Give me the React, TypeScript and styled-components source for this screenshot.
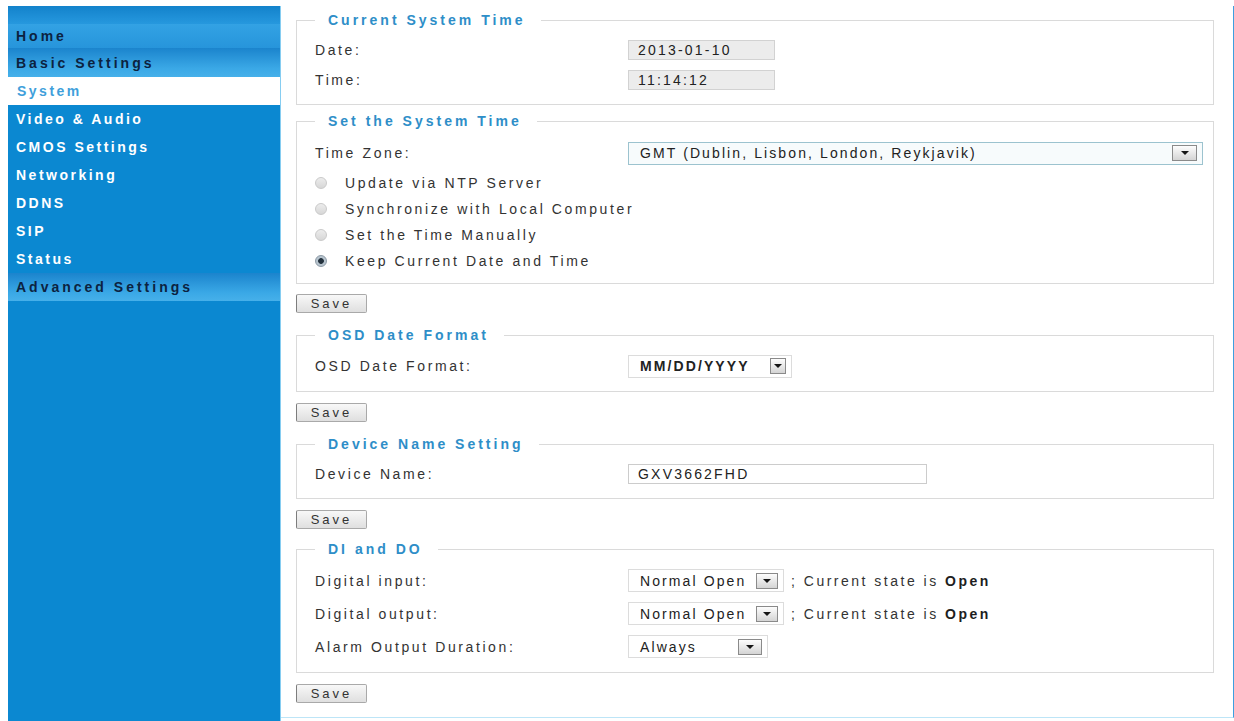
import React from "react";
import styled, { createGlobalStyle } from "styled-components";

const GlobalStyle = createGlobalStyle`
  html, body { margin: 0; padding: 0; background: #ffffff; }
  body {
    font-family: "Liberation Sans", Arial, Helvetica, sans-serif;
    font-size: 14px;
    color: #333333;
  }
  * { box-sizing: border-box; }
`;

const Page = styled.div`
  display: flex;
  align-items: flex-start;
  min-height: 100vh;
  padding: 6px 0 0 8px;
`;

/* ---------- left navigation ---------- */

const Sidebar = styled.nav`
  align-self: stretch;
  flex: none;
  width: 273px;
  display: flex;
  flex-direction: column;
  background: #0b88d1;
  border-right: 1px solid #86cdf1;
`;

const SideTop = styled.div`
  height: 18px;
  background: linear-gradient(#1382cb, #2698de);
`;

const SideHeader = styled.div<{ $h: number; $rise?: boolean }>`
  height: ${(p) => p.$h}px;
  display: flex;
  align-items: center;
  padding-left: 8px;
  font-weight: bold;
  letter-spacing: 3px;
  color: #0c2240;
  background: ${(p) =>
    p.$rise
      ? "linear-gradient(#1b84cd, #3aa8e6 70%, #46b0ea)"
      : "linear-gradient(#33a2e4, #2795db)"};
`;

const SideItem = styled.div<{ $active?: boolean }>`
  height: 28px;
  display: flex;
  align-items: center;
  padding-left: ${(p) => (p.$active ? 9 : 8)}px;
  font-weight: bold;
  letter-spacing: 2.5px;
  color: ${(p) => (p.$active ? "#3f9fdb" : "#ffffff")};
  background: ${(p) => (p.$active ? "#ffffff" : "transparent")};
`;

/* ---------- settings panel ---------- */

const Main = styled.main`
  flex: 1;
  align-self: flex-start;
  min-width: 0;
  margin-bottom: 3px;
  padding: 6px 19px 14px 15px;
  border-right: 1px solid #3c9fe0;
  border-bottom: 1px solid #bde5f7;
`;

const Group = styled.fieldset<{ $gap?: number }>`
  margin: ${(p) => p.$gap ?? 0}px 0 0;
  padding: 7px 18px 9px;
  min-width: 0;
  border: 1px solid #dadada;
`;

const Title = styled.legend`
  padding: 0 15px 0 13px;
  line-height: 16px;
  font-weight: bold;
  letter-spacing: 3px;
  color: #2e8ec8;
`;

const Row = styled.div<{ $h: number }>`
  display: flex;
  align-items: center;
  height: ${(p) => p.$h}px;
`;

const Label = styled.div`
  flex: none;
  width: 313px;
  letter-spacing: 2.6px;
  color: #333333;
`;

const TextField = styled.div<{ $w: number; $readonly?: boolean }>`
  flex: none;
  width: ${(p) => p.$w}px;
  height: 20px;
  display: flex;
  align-items: center;
  padding-left: 9px;
  letter-spacing: 2.2px;
  color: #222222;
  border: 1px solid ${(p) => (p.$readonly ? "#d2d2d2" : "#cccccc")};
  background: ${(p) => (p.$readonly ? "#ececec" : "#ffffff")};
`;

const Dropdown = styled.div<{ $w: number; $tint?: boolean }>`
  flex: none;
  width: ${(p) => p.$w}px;
  height: 23px;
  display: flex;
  align-items: center;
  justify-content: space-between;
  padding: 0 5px 0 11px;
  border: 1px solid ${(p) => (p.$tint ? "#9cc3cf" : "#dcdcdc")};
  background: ${(p) => (p.$tint ? "#f7fbfc" : "#ffffff")};
`;

const DropText = styled.span<{ $bold?: boolean }>`
  letter-spacing: 2.1px;
  white-space: nowrap;
  color: #222222;
  font-weight: ${(p) => (p.$bold ? "bold" : "normal")};
`;

const DropArrow = styled.span<{ $w: number }>`
  flex: none;
  width: ${(p) => p.$w}px;
  height: 16px;
  display: flex;
  align-items: center;
  justify-content: center;
  border: 1px solid #8a8a8a;
  background: linear-gradient(#fdfdfd, #d4d4d4);

  &::after {
    content: "";
    border-left: 4px solid transparent;
    border-right: 4px solid transparent;
    border-top: 4px solid #151515;
  }
`;

const RadioDot = styled.span<{ $on?: boolean }>`
  flex: none;
  width: 12px;
  height: 12px;
  margin-right: 18px;
  border-radius: 50%;
  border: 1px solid ${(p) => (p.$on ? "#8d9aa6" : "#cacaca")};
  background: ${(p) =>
    p.$on
      ? "radial-gradient(circle, #24323e 0, #24323e 2.5px, #b7c4ce 3.2px)"
      : "linear-gradient(#ececec, #d7d7d7)"};
`;

const RadioText = styled.span`
  letter-spacing: 2.6px;
  color: #333333;
`;

const StateNote = styled.span`
  margin-left: 7px;
  letter-spacing: 2.5px;
  color: #333333;
  white-space: nowrap;

  b {
    color: #1e1e1e;
  }
`;

const SaveButton = styled.button<{ $gap?: number }>`
  display: block;
  width: 71px;
  height: 19px;
  margin-top: ${(p) => p.$gap ?? 11}px;
  padding: 0;
  font: inherit;
  font-size: 13px;
  letter-spacing: 3px;
  color: #333333;
  border: 1px solid #a9a9a9;
  border-left-color: #7d7d7d;
  border-radius: 2px;
  background: linear-gradient(#f8f8f8, #dfdfdf);
  cursor: pointer;
`;

const navItems = [
  "Video & Audio",
  "CMOS Settings",
  "Networking",
  "DDNS",
  "SIP",
  "Status",
];

const timeModes = [
  { label: "Update via NTP Server", on: false },
  { label: "Synchronize with Local Computer", on: false },
  { label: "Set the Time Manually", on: false },
  { label: "Keep Current Date and Time", on: true },
];

export default function App() {
  return (
    <>
      <GlobalStyle />
      <Page>
        <Sidebar>
          <SideTop />
          <SideHeader $h={24}>Home</SideHeader>
          <SideHeader $h={29} $rise>
            Basic Settings
          </SideHeader>
          <SideItem $active>System</SideItem>
          {navItems.map((item) => (
            <SideItem key={item}>{item}</SideItem>
          ))}
          <SideHeader $h={28} $rise>
            Advanced Settings
          </SideHeader>
        </Sidebar>

        <Main>
          <Group>
            <Title>Current System Time</Title>
            <Row $h={30}>
              <Label>Date:</Label>
              <TextField $w={147} $readonly>
                2013-01-10
              </TextField>
            </Row>
            <Row $h={30}>
              <Label>Time:</Label>
              <TextField $w={147} $readonly>
                11:14:12
              </TextField>
            </Row>
          </Group>

          <Group $gap={8}>
            <Title>Set the System Time</Title>
            <Row $h={34}>
              <Label>Time Zone:</Label>
              <Dropdown $w={575} $tint>
                <DropText>GMT (Dublin, Lisbon, London, Reykjavik)</DropText>
                <DropArrow $w={25} />
              </Dropdown>
            </Row>
            {timeModes.map((m) => (
              <Row $h={26} key={m.label}>
                <RadioDot $on={m.on} />
                <RadioText>{m.label}</RadioText>
              </Row>
            ))}
          </Group>
          <SaveButton $gap={10}>Save</SaveButton>

          <Group $gap={14}>
            <Title>OSD Date Format</Title>
            <Row $h={32}>
              <Label>OSD Date Format:</Label>
              <Dropdown $w={164}>
                <DropText $bold>MM/DD/YYYY</DropText>
                <DropArrow $w={16} />
              </Dropdown>
            </Row>
          </Group>
          <SaveButton>Save</SaveButton>

          <Group $gap={14}>
            <Title>Device Name Setting</Title>
            <Row $h={30}>
              <Label>Device Name:</Label>
              <TextField $w={299}>GXV3662FHD</TextField>
            </Row>
          </Group>
          <SaveButton>Save</SaveButton>

          <Group $gap={12}>
            <Title>DI and DO</Title>
            <Row $h={33}>
              <Label>Digital input:</Label>
              <Dropdown $w={156}>
                <DropText>Normal Open</DropText>
                <DropArrow $w={22} />
              </Dropdown>
              <StateNote>
                ; Current state is <b>Open</b>
              </StateNote>
            </Row>
            <Row $h={33}>
              <Label>Digital output:</Label>
              <Dropdown $w={156}>
                <DropText>Normal Open</DropText>
                <DropArrow $w={22} />
              </Dropdown>
              <StateNote>
                ; Current state is <b>Open</b>
              </StateNote>
            </Row>
            <Row $h={33}>
              <Label>Alarm Output Duration:</Label>
              <Dropdown $w={140}>
                <DropText>Always</DropText>
                <DropArrow $w={24} />
              </Dropdown>
            </Row>
          </Group>
          <SaveButton>Save</SaveButton>
        </Main>
      </Page>
    </>
  );
}
